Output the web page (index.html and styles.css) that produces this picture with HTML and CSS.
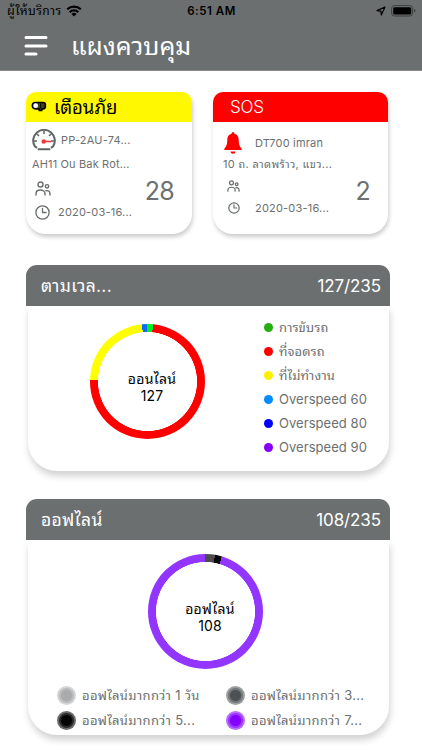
FILE: index.html
```html
<!DOCTYPE html>
<html lang="th">
<head>
    <meta charset="UTF-8">
    <meta name="viewport" content="width=device-width, initial-scale=1.0">
    <title>แผงควบคุม</title>
    <link rel="stylesheet" href="styles.css">
</head>
<body>
    <!-- Header -->
    <header class="header">
        <div class="status-bar">
            <div class="status-left">
                <span class="carrier">ผู้ให้บริการ</span>
                <svg class="wifi" width="16" height="12" viewBox="0 0 16 12" fill="none" stroke="#000" stroke-width="2.2">
                    <path d="M1.2 4.3a10 10 0 0 1 13.6 0"/>
                    <path d="M3.7 7.2a6.2 6.2 0 0 1 8.6 0"/>
                    <path d="M8 11.6L5.4 9a3.7 3.7 0 0 1 5.2 0z" fill="#000" stroke="none"/>
                </svg>
            </div>
            <span class="time">6:51 AM</span>
            <div class="status-right">
                <svg width="10" height="10" viewBox="0 0 10 10" fill="none" stroke="#000" stroke-width="1.2" stroke-linejoin="round">
                    <path d="M9 1L1 4.6l3.9.5.4 3.9z"/>
                </svg>
                <svg width="25" height="12" viewBox="0 0 25 12">
                    <rect x=".6" y=".6" width="21" height="10.4" rx="3" fill="none" stroke="#3c3f3f"/>
                    <rect x="2.2" y="2.2" width="18" height="7.2" rx="1.5" fill="#000"/>
                    <path d="M23 4v3.6q1.5-.6 1.5-1.8T23 4z" fill="#3c3f3f"/>
                </svg>
            </div>
        </div>
        <div class="nav">
            <svg class="menu-icon" width="24" height="22" viewBox="0 0 24 22" stroke="#fff" stroke-width="3" stroke-linecap="round">
                <path d="M2 2.5h20M2 11h20M2 19h10"/>
            </svg>
            <h1>แผงควบคุม</h1>
        </div>
    </header>

    <main class="content">
        <!-- Alert cards -->
        <div class="cards">
            <section class="card warning">
                <div class="card-head">
                    <svg width="16" height="12" viewBox="0 0 16 12">
                        <path d="M4.5 1.5H12q2.4 0 2.4 2.4v1.6q0 2.4-2.4 2.4h-1.3v1.5H8.2V7.9H4.5a3.2 3.2 0 0 1 0-6.4z" fill="#3f3f22" stroke="#000" stroke-width="1.5"/>
                        <path d="M9.5 2.600v4.600" stroke="#000" stroke-width=".8"/>
                        <circle cx="4.700" cy="4.700" r="2.400" fill="#fff"/>
                    </svg>
                    <h2>เตือนภัย</h2>
                </div>
                <div class="card-body">
                    <div class="device">
                        <svg width="24" height="22" viewBox="0 0 24 22" fill="none" stroke="#5f6464" stroke-width="2">
                            <path d="M5 18.8l-2.2-1.5a10.8 10.8 0 1 1 18.4 0L19 18.8"/>
                            <path d="M12 2v3M5 5l2 2M19 5l-2 2M1.5 12H5M19 12h3.5" stroke-width="1.5"/>
                            <path d="M6.5 20.3h11" stroke-linecap="round"/>
                            <path d="M12 12.5h7" stroke="#f03a3a" stroke-width="1.6"/>
                            <circle cx="11.7" cy="12.5" r="2.2" fill="#f03a3a" stroke="none"/>
                        </svg>
                        <span class="device-name">PP-2AU-74...</span>
                    </div>
                    <p class="address">AH11 Ou Bak Rot...</p>
                    <div class="people">
                        <svg width="16" height="15" viewBox="0 0 16 15" fill="none" stroke="#686c6c" stroke-width="1.4" stroke-linecap="round">
                            <circle cx="5.5" cy="3.5" r="2.5"/>
                            <circle cx="12" cy="5.3" r="1.7"/>
                            <path d="M1 14v-1.2c0-5 9-5 9 0V14M11 9.8c2.5-.6 4 .7 4 2.9V14"/>
                        </svg>
                    </div>
                    <div class="date-row">
                        <svg width="15" height="15" viewBox="0 0 15 15" fill="none" stroke="#686c6c" stroke-width="1.3" stroke-linecap="round">
                            <circle cx="7.5" cy="7.5" r="6.6"/>
                            <path d="M7.5 3.5v4h3.6"/>
                        </svg>
                        <span class="date">2020-03-16...</span>
                    </div>
                    <span class="count">28</span>
                </div>
            </section>

            <section class="card sos">
                <div class="card-head">
                    <h2>SOS</h2>
                </div>
                <div class="card-body">
                    <div class="device">
                        <svg width="20" height="22" viewBox="0 0 20 22" fill="#f00">
                            <path d="M10 0q1.3 0 1.5 1.7c3.4.9 4.1 3.5 4.2 6.3.1 4.8 1.1 6.6 3 8.800v1.300H1.300v-1.300C3.200 14.600 4.200 12.800 4.300 8c.1-2.800.8-5.400 4.200-6.300Q8.700 0 10 0z"/>
                            <path d="M7.500 19.500h5a2.500 2.300 0 0 1-5 0z"/>
                        </svg>
                        <span class="device-name">DT700 imran</span>
                    </div>
                    <p class="address">10 ถ. ลาดพร้าว, แขว...</p>
                    <div class="people">
                        <svg width="13" height="12" viewBox="0 0 16 15" fill="none" stroke="#686c6c" stroke-width="1.5" stroke-linecap="round">
                            <circle cx="5.5" cy="3.5" r="2.5"/>
                            <circle cx="12" cy="5.3" r="1.7"/>
                            <path d="M1 14v-1.2c0-5 9-5 9 0V14M11 9.8c2.5-.6 4 .7 4 2.9V14"/>
                        </svg>
                    </div>
                    <div class="date-row">
                        <svg width="12" height="12" viewBox="0 0 15 15" fill="none" stroke="#686c6c" stroke-width="1.5" stroke-linecap="round">
                            <circle cx="7.5" cy="7.5" r="6.5"/>
                            <path d="M7.5 3.5v4h3.6"/>
                        </svg>
                        <span class="date">2020-03-16...</span>
                    </div>
                    <span class="count">2</span>
                </div>
            </section>
        </div>

        <!-- Online -->
        <section class="panel online">
            <div class="panel-head">
                <h2>ตามเวล...</h2>
                <span>127/235</span>
            </div>
            <div class="panel-body">
                <div class="donut donut-online">
                    <div class="donut-label">
                        <span class="donut-title">ออนไลน์</span>
                        <span class="donut-value">127</span>
                    </div>
                </div>
                <ul class="legend">
                    <li><i class="dot driving"></i><span>การขับรถ</span></li>
                    <li><i class="dot parked"></i><span>ที่จอดรถ</span></li>
                    <li><i class="dot idle"></i><span>ที่ไม่ทำงาน</span></li>
                    <li><i class="dot over60"></i><span>Overspeed 60</span></li>
                    <li><i class="dot over80"></i><span>Overspeed 80</span></li>
                    <li><i class="dot over90"></i><span>Overspeed 90</span></li>
                </ul>
            </div>
        </section>

        <!-- Offline -->
        <section class="panel offline">
            <div class="panel-head">
                <h2>ออฟไลน์</h2>
                <span>108/235</span>
            </div>
            <div class="panel-body">
                <div class="donut donut-offline">
                    <div class="donut-label">
                        <span class="donut-title">ออฟไลน์</span>
                        <span class="donut-value">108</span>
                    </div>
                </div>
                <ul class="days">
                    <li><i class="ring day1"></i><span>ออฟไลน์มากกว่า 1 วัน</span></li>
                    <li><i class="ring day3"></i><span>ออฟไลน์มากกว่า 3...</span></li>
                    <li><i class="ring day5"></i><span>ออฟไลน์มากกว่า 5...</span></li>
                    <li><i class="ring day7"></i><span>ออฟไลน์มากกว่า 7...</span></li>
                </ul>
            </div>
        </section>
    </main>
</body>
</html>
```
FILE: styles.css
```css
* {
    box-sizing: border-box;
}

body {
    margin: 0;
    height: 750px;
    overflow: hidden;
    background-color: #fff;
    color: #6c7070;
    font-family: Inter, "Noto Sans Thai Looped", "Noto Looped Thai", "Loma", "Garuda", "Waree", "Umpush", sans-serif;
}

h1, h2, p, ul {
    margin: 0;
    padding: 0;
    font-weight: normal;
    list-style: none;
}

svg {
    display: block;
    flex: none;
}

span, h1, h2, p {
    white-space: nowrap;
}

/* Header */
.header {
    height: 71px;
    background-color: #6b6f6f;
    border-bottom: 1px solid #8d8989;
}

.status-bar {
    display: grid;
    grid-template-columns: 1fr auto 1fr;
    align-items: center;
    height: 22px;
    padding: 0 6px 0 7px;
    color: #000;
}

.status-left,
.status-right {
    display: flex;
    align-items: center;
    gap: 5px;
}

.status-right {
    justify-content: flex-end;
}

.carrier {
    width: 54px;
    font-size: 12px;
    letter-spacing: 0.4px;
    line-height: 22px;
}

.time {
    font-size: 11.5px;
    font-weight: 600;
    letter-spacing: 0.5px;
}

.nav {
    display: flex;
    align-items: center;
    gap: 23px;
    height: 48px;
    padding-left: 24px;
    color: #fff;
}

.nav h1 {
    font-size: 25px;
    line-height: 48px;
}

/* Cards */
.content {
    padding: 21px 32px 0 26px;
}

.cards {
    display: grid;
    grid-template-columns: 166px 175px;
    gap: 21px;
}

.card {
    height: 142px;
    border-radius: 10px 10px 20px 20px;
    background-color: #fff;
    box-shadow: 1px 3px 4px rgba(0, 0, 0, 0.2);
}

.card-head {
    display: flex;
    align-items: center;
    height: 30px;
    border-radius: 10px 10px 0 0;
}

.card-head h2 {
    font-size: 18px;
    line-height: 30px;
}

.warning .card-head {
    gap: 7px;
    padding-left: 5px;
    background-color: #fff800;
    color: #000;
}

.warning .card-head h2 {
    font-size: 18.5px;
    letter-spacing: 0;
}

.sos .card-head {
    padding-left: 17px;
    background-color: #f00;
    color: #fff;
}

.sos .card-head h2 {
    font-size: 17px;
    font-weight: 300;
    letter-spacing: -0.2px;
}

.card-body {
    display: grid;
    grid-template-columns: 1fr auto;
    grid-template-rows: 35px 14px 30px 21px;
    font-size: 11px;
    padding-left: 6px;
}

.device,
.address {
    grid-column: 1 / 3;
}

.device,
.people,
.date-row {
    display: flex;
    align-items: center;
}

.device {
    gap: 5px;
}

.device-name {
    letter-spacing: 0.2px;
}

.address {
    line-height: 14px;
    font-size: 11px;
    letter-spacing: 0.15px;
}

.people {
    padding: 4px 0 0 3px;
}

.date-row {
    gap: 8px;
    grid-row: 4;
    padding: 1px 0 0 3px;
}

.date {
    letter-spacing: 0.2px;
}

.count {
    grid-column: 2;
    grid-row: 3;
    padding: 7px 18px 0 0;
    font-size: 25px;
    letter-spacing: -0.7px;
    line-height: 26px;
}

.sos .address {
    letter-spacing: 0.35px;
}

.sos .card-body {
    grid-template-rows: 35px 14px 28px 17px;
    padding-left: 10px;
}

.sos .device {
    gap: 12px;
    padding-top: 7px;
}

.sos .people {
    padding: 1px 0 0 4px;
}

.sos .date-row {
    gap: 15px;
    padding: 0 0 0 5px;
}

/* Panels */
.panel {
    width: 364px;
}

.online {
    margin-top: 31px;
}

.offline {
    margin-top: 28px;
}

.panel-head {
    display: flex;
    align-items: center;
    justify-content: space-between;
    height: 41px;
    padding: 0 9px 0 15px;
    border-radius: 11px 11px 0 0;
    background-color: #6b6f6f;
    color: #fff;
    font-size: 17px;
    letter-spacing: -0.1px;
}

.panel-head h2 {
    font-size: 17.5px;
    letter-spacing: 0.3px;
    line-height: 41px;
}

.panel-body {
    margin: 0 1px 0 2px;
    border-radius: 0 0 29px 29px;
    background-color: #fff;
    box-shadow: 1px 5px 7px rgba(0, 0, 0, 0.18);
}

.online .panel-body {
    display: flex;
    gap: 59px;
    height: 165px;
    padding: 9px 0 0 62px;
}

.offline .panel-body {
    height: 195px;
    padding-top: 14px;
}

.donut {
    display: flex;
    flex: none;
    align-items: center;
    justify-content: center;
    width: 115px;
    height: 115px;
    border-radius: 50%;
}

.donut-online {
    margin-top: 9px;
    background: radial-gradient(circle, #fff 49.2px, transparent 49.8px), conic-gradient(#00f01c 0 5.5deg, #f00 5.5deg 272deg, #ff0 272deg 354.5deg, #0a6cf0 354.5deg);
}

.donut-offline {
    margin-left: 120px;
    background: radial-gradient(circle, #fff 49.2px, transparent 49.8px), conic-gradient(#4c4c4e 0 9.5deg, #080808 9.5deg 16.5deg, #9135ff 16.5deg);
}

.donut-label {
    display: flex;
    flex-direction: column;
    align-items: center;
    padding: 10px 0 0 9px;
    color: #000;
    font-size: 14px;
    line-height: 17px;
}

.donut-title {
    letter-spacing: 0.3px;
}

.donut-value {
    letter-spacing: 0.1px;
}

.legend li {
    display: flex;
    align-items: center;
    gap: 6px;
    height: 24px;
    font-size: 13px;
    letter-spacing: 0.05px;
    line-height: 24px;
}

.dot {
    width: 9px;
    height: 9px;
    border-radius: 50%;
}

.driving { background-color: #24ae10; }
.parked { background-color: #f00; }
.idle { background-color: #fff000; }
.over60 { background-color: #078cff; }
.over80 { background-color: #00f; }
.over90 { background-color: #8500f8; }

.days {
    display: grid;
    grid-template-columns: 169px 1fr;
    grid-auto-rows: 25px;
    padding: 14px 0 0 29px;
    font-size: 13px;
    letter-spacing: 0.3px;
}

.days li {
    display: flex;
    align-items: center;
    gap: 6px;
    line-height: 25px;
}

.ring {
    width: 19px;
    height: 19px;
    border-radius: 50%;
}

.day1 { background: radial-gradient(circle, #a9abad 5px, #b9bbbd 6px 7px, #d3d5d6 8px 9px); }
.day3 { background: radial-gradient(circle, #4e5153 5px, #747778 6px 7px, #9c9fa0 8px 9px); }
.day5 { background: radial-gradient(circle, #050505 5px, #2b2b2b 6px 7px, #6b6b6b 8px 9px); }
.day7 { background: radial-gradient(circle, #8400ff 5px, #9b35ff 6px 7px, #b66cff 8px 9px); }
```
